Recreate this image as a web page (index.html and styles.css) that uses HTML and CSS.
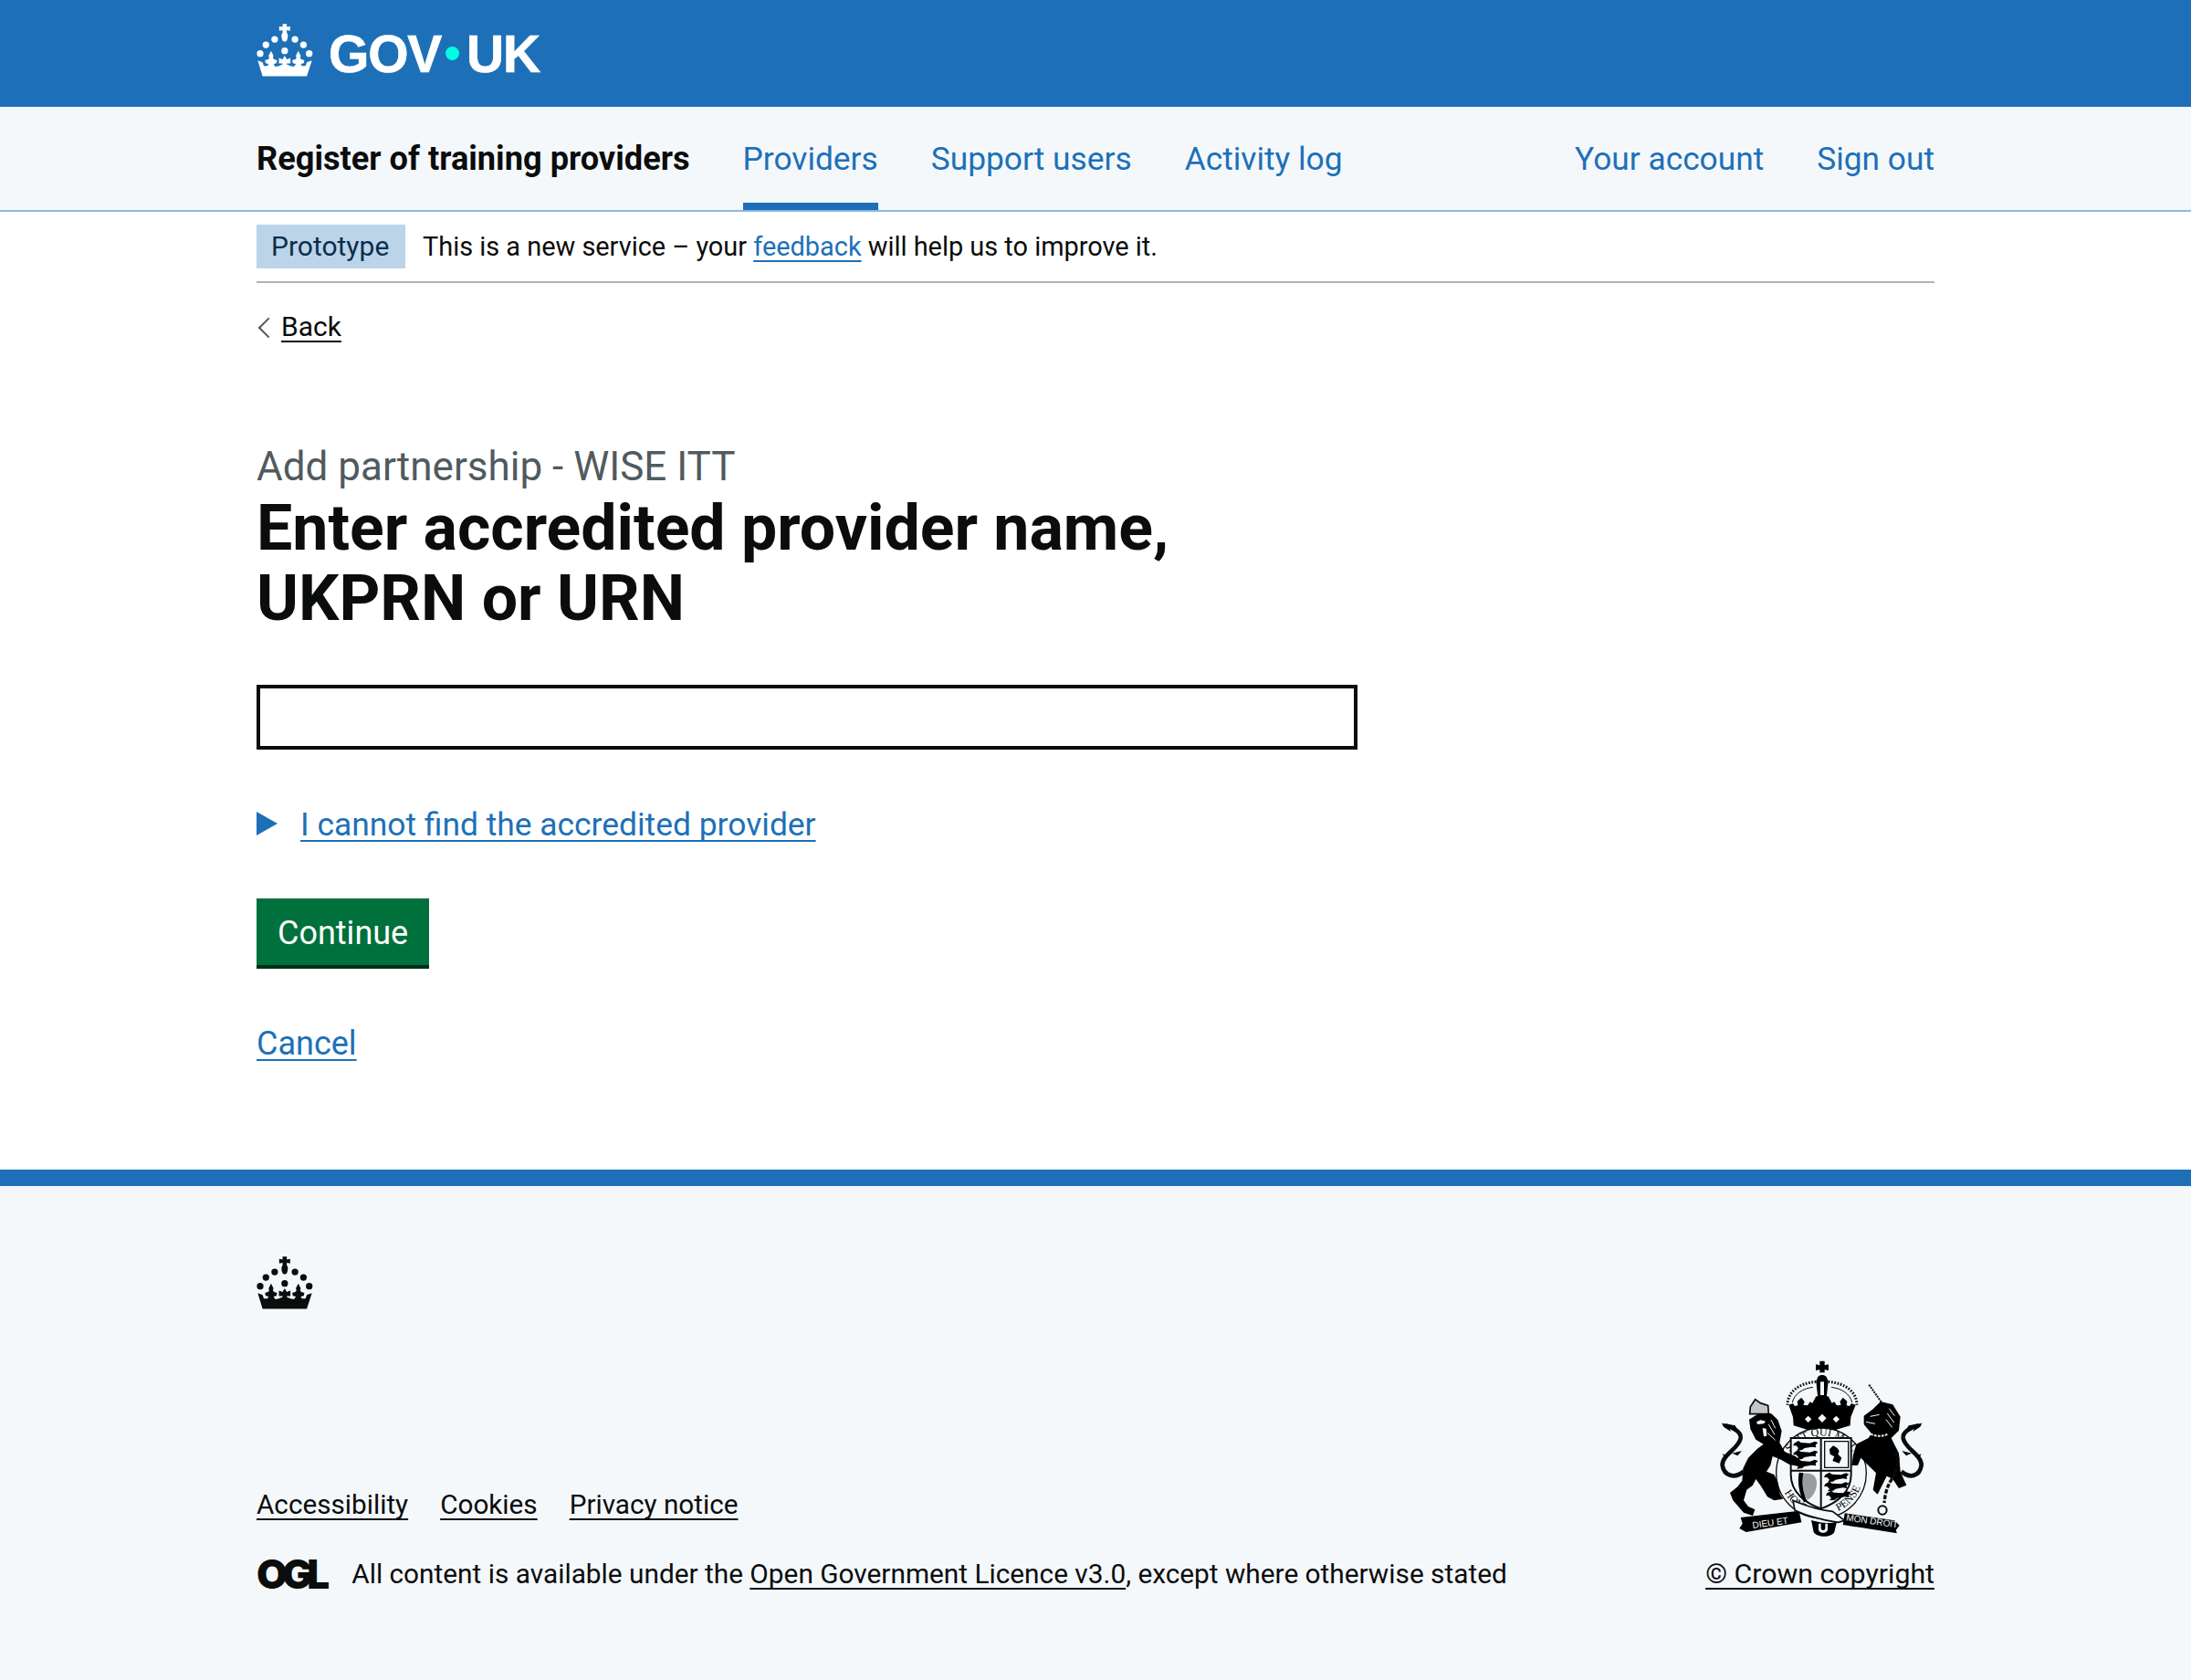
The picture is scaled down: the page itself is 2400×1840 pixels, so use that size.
FILE: index.html
```html
<!DOCTYPE html>
<html lang="en">
<head>
    <meta charset="UTF-8">
    <title>Enter accredited provider name, UKPRN or URN - Register of training providers</title>
    <link rel="stylesheet" href="styles.css">
</head>
<body>
    <svg class="defs" width="0" height="0">
        <symbol id="crown" viewBox="60 70 190 180">
            <path d="M146 73h14v10l11-2v15l-11-2v8c5 6 5 14 0 26 -2 4-12 4-14 0-5-12-5-20 0-26v-8l-11 2V81l11 2z"/>
            <circle cx="120" cy="124" r="11"/><circle cx="187" cy="124" r="11"/>
            <circle cx="91" cy="142" r="11"/><circle cx="215" cy="142" r="11"/>
            <circle cx="72" cy="171" r="11"/><circle cx="234" cy="171" r="11"/>
            <circle cx="153" cy="162" r="11"/>
            <path d="M64 194L80 200 84 212 96 212 100 205 90 203 88 193 98 190 102 186 100 178 108 162 116 178 114 186 118 190 128 193 126 203 116 205 122 214 134 212 146 207 146 204 134 204 134 186 146 190 153 178 160 190 172 186 172 204 160 204 160 207 172 212 184 214 190 205 180 203 178 193 188 190 192 186 190 178 198 162 206 178 204 186 208 190 218 193 216 203 206 205 210 212 222 212 226 200 243 194 226 246 80 246Z"/>
        </symbol>
    </svg>

    <header class="top-bar">
        <div class="wrap">
            <a class="logo" href="#">
                <svg class="crown-icon header-crown"><use href="#crown"/></svg>
                <span class="logo-text">GOV<span class="logo-dot"></span>UK</span>
            </a>
        </div>
    </header>

    <nav class="service-nav">
        <div class="wrap nav-row">
            <a class="service-name" href="#">Register of training providers</a>
            <a class="nav-link active" href="#">Providers</a>
            <a class="nav-link" href="#">Support users</a>
            <a class="nav-link" href="#">Activity log</a>
            <a class="nav-link push-right" href="#">Your account</a>
            <a class="nav-link" href="#">Sign out</a>
        </div>
    </nav>

    <div class="wrap">
        <div class="phase-banner">
            <strong class="phase-tag">Prototype</strong>
            <span class="phase-text">This is a new service – your <a class="link" href="#">feedback</a> will help us to improve it.</span>
        </div>
        <a class="back-link" href="#">Back</a>

        <main class="content">
            <span class="caption">Add partnership - WISE ITT</span>
            <h1>Enter accredited provider name, UKPRN or URN</h1>
            <input class="text-input" type="text">
            <div class="details">
                <span class="details-arrow"></span>
                <a class="link" href="#">I cannot find the accredited provider</a>
            </div>
            <button class="button">Continue</button>
            <p class="cancel"><a class="link" href="#">Cancel</a></p>
        </main>
    </div>

    <footer class="footer">
        <div class="wrap">
            <svg class="crown-icon footer-crown"><use href="#crown"/></svg>
            <div class="footer-row">
                <div class="footer-left">
                    <ul class="footer-links">
                        <li><a href="#">Accessibility</a></li>
                        <li><a href="#">Cookies</a></li>
                        <li><a href="#">Privacy notice</a></li>
                    </ul>
                    <div class="licence">
                        <span class="ogl">OGL</span>
                        <span>All content is available under the <a href="#">Open Government Licence v3.0</a>, except where otherwise stated</span>
                    </div>
                </div>
                <div class="footer-right">
                    <svg class="arms" viewBox="0 0 810 660">
                        <defs>
                            <path id="garter-top" d="M282 400a123 123 0 0 1 246 0"/>
                            <path id="garter-low" d="M268 400a137 137 0 0 0 274 0"/>
                            <path id="leopard" d="M0 8l14-8 8 6 30 2 16-6 10 4-8 8 2 8-14-2-24 4-8 6-18 2 6-8-8-8-10 0z"/>
                        </defs>
                        <!-- crown -->
                        <path d="M400 32h16v14l13-3v20l-13-3v10h-16V60l-13 3V43l13 3z"/>
                        <path d="M394 84c8-8 20-8 28 0l6 14-6 56h-28l-6-56z"/>
                        <path class="white" d="M402 100h12v44h-12z"/>
                        <path class="dots" d="M388 100c-56 4-94 34-94 76M428 100c56 4 94 34 94 76"/>
                        <path class="thin" d="M378 118c-34 4-62 22-68 50M438 118c34 4 62 22 68 50"/>
                        <path d="M298 176L312 171 318 180 328 178 326 164 340 152 350 166 346 176 360 178 368 166 376 170 388 148 428 148 440 170 448 166 456 178 470 176 466 166 476 152 490 164 488 178 498 180 504 171 518 176 502 216 500 244 440 262 372 262 314 244 312 216Z"/>
                        <path class="white" d="M408 206l14 14-14 14-14-14zM362 212l11 11-11 11-11-11zM454 212l11 11-11 11-11-11z"/>
                        <!-- garter and shield -->
                        <circle class="garter" cx="405" cy="400" r="148"/>
                        <text class="garter-text"><textPath href="#garter-top" startOffset="50%" text-anchor="middle">SOIT QUI MAL</textPath></text>
                        <text class="garter-text"><textPath href="#garter-low" startOffset="26%" text-anchor="middle">HONI</textPath></text>
                        <text class="garter-text"><textPath href="#garter-low" startOffset="76%" text-anchor="middle">PENSE</textPath></text>
                        <path class="shield" d="M305 285h198v120c0 60-50 95-99 112-49-17-99-52-99-112z"/>
                        <path class="shield-line" d="M404 285v232M305 392h198"/>
                        <path class="shield-inner" d="M416 296h78v86h-78z"/>
                        <use href="#leopard" x="316" y="294"/>
                        <use href="#leopard" x="316" y="324"/>
                        <use href="#leopard" x="316" y="354"/>
                        <path d="M432 322l12-12 14 8 6 10-4 10 12 12-8 18-22-8 6-14-14-8z"/>
                        <use href="#leopard" x="418" y="398"/>
                        <use href="#leopard" x="418" y="428"/>
                        <use href="#leopard" x="424" y="458"/>
                        <path class="harp" d="M342 402c30-6 48 6 48 30 0 32-18 50-30 56-10-10-18-36-18-86z"/>
                        <path d="M332 398l14 2c-6 30-2 60 12 92l-10 4c-16-30-22-66-16-98z"/>
                        <!-- lion -->
                        <path class="lion-crown" d="M170 206L172 182 188 158 205 170 230 178 232 206Z"/>
                        <path d="M168 224L200 204 240 204 262 225 275 262 268 300 285 330 320 345 345 365 330 378 300 372 270 355 245 345 238 375 225 395 250 405 262 430 270 470 280 485 250 490 228 478 205 440 190 420 180 440 160 455 150 490 165 510 187 520 180 540 150 530 115 490 105 465 130 445 145 425 148 385 165 350 195 320 215 305 190 290 172 255Z"/>
                        <path class="white" d="M192 232l14-6 16 4-6 8-20 2zM212 252l12 2 2 24-10 2z"/>
                        <path class="mane" d="M240 225l14 28M232 240l20 34M228 268l26 24"/>
                        <!-- lion tail -->
                        <path class="tail" d="M150 395C120 420 86 410 80 375 78 340 135 320 140 285 142 265 115 250 90 244"/>
                        <path d="M78 236l44 8 10 18-30-12 6 14-24-16zM112 335l32-8-14 16zM100 345l-20-8 10 18z"/>
                        <!-- unicorn -->
                        <path class="horn" d="M562 110L606 172"/>
                        <path d="M545 212L575 190 600 165 640 175 665 215 660 260 635 285 660 335 665 395 685 440 660 450 640 420 620 410 590 470 575 455 585 400 560 375 535 350 525 375 505 375 510 340 520 305 560 285 570 270 545 240Z"/>
                        <path class="mane" d="M628 188l18 24M622 204l22 30M618 224l20 26M566 214l30-6M552 232l30 6"/>
                        <path class="collar" d="M548 258c20 20 50 26 76 14"/>
                        <path class="chain" d="M648 330c18 26 8 60-16 98-12 20-18 46-20 70"/>
                        <circle class="ring" cx="606" cy="522" r="14"/>
                        <!-- unicorn tail -->
                        <path class="tail" d="M668 395C698 420 728 410 734 375 736 340 679 320 674 285 672 265 699 250 724 244"/>
                        <path d="M736 236l-44 8-10 18 30-12-6 14 24-16zM702 335l-32-8 14 16zM714 345l20-8-10 18z"/>
                        <!-- motto -->
                        <path d="M372 554c20 8 60 14 84 6l-8 34c-8 18-56 20-68 0z"/>
                        <path class="white" d="M396 566h8v16c0 8 14 8 14 0v-16h8v18c0 16-30 16-30 0z"/>
                        <path d="M140 546L332 524 340 562 158 594 136 582 146 566Z"/>
                        <path d="M482 532L646 556 662 572 650 588 654 598 476 570Z"/>
                        <path class="ribbon" d="M312 490c30 12 70 30 130 36l40 30-22 6c-50-6-110-24-142-40z"/>
                        <text class="motto" transform="translate(180 582) rotate(-8)">DIEU ET</text>
                        <text class="motto" transform="translate(486 556) rotate(8)">MON DROIT</text>
                    </svg>
                    <a class="copyright" href="#">© Crown copyright</a>
                </div>
            </div>
        </div>
    </footer>
</body>
</html>
```

FILE: styles.css
```css
* {
    box-sizing: border-box;
}
body {
    margin: 0;
    font-family: Roboto, "Noto Sans", Arial, sans-serif;
    font-size: 30px;
    line-height: 38px;
    color: #0b0c0c;
    background-color: white;
}
a {
    text-decoration-thickness: 2px;
    text-decoration-skip-ink: none;
    text-underline-offset: 5px;
}
.defs {
    position: absolute;
}
.wrap {
    width: 1838px;
    margin: 0 auto;
}
.top-bar {
    height: 117px;
    background-color: #1d70b8;
}
.logo {
    display: flex;
    align-items: center;
    gap: 16px;
    height: 117px;
    color: white;
    text-decoration: none;
}
.crown-icon {
    width: 63px;
    height: 60px;
    fill: currentColor;
    flex-shrink: 0;
}
.header-crown {
    margin-bottom: 8px;
}
.logo-text {
    display: flex;
    align-items: center;
    font-family: "Liberation Sans", Arial, sans-serif;
    font-weight: bold;
    font-size: 57px;
    line-height: 60px;
    letter-spacing: -1.2px;
    -webkit-text-stroke: 0.7px white;
}
.logo-dot {
    width: 15px;
    height: 15px;
    margin: 0 8px 0 5px;
    border-radius: 50%;
    background-color: #00ffe0;
}
.service-nav {
    height: 115px;
    background-color: #f4f8fb;
    border-bottom: 2px solid #8eb8dc;
}
.nav-row {
    display: flex;
    height: 113px;
    gap: 58px;
    align-items: stretch;
    font-size: 35.3px;
}
.service-name {
    display: flex;
    align-items: center;
    font-size: 36.2px;
    font-weight: bold;
    color: #0b0c0c;
    text-decoration: none;
}
.nav-link {
    display: flex;
    align-items: center;
    color: #1d70b8;
    text-decoration: none;
    border-bottom: 8px solid transparent;
    padding-top: 8px;
}
.nav-link.active {
    border-bottom-color: #1d70b8;
}
.push-right {
    margin-left: auto;
}
.phase-banner {
    display: flex;
    align-items: center;
    gap: 19px;
    height: 78px;
    border-bottom: 2px solid #b1b4b6;
}
.phase-tag {
    padding: 5px 16px;
    min-width: 163px;
    font-weight: normal;
    color: #0c2d4a;
    background-color: #bbd4ea;
}
.phase-text {
    font-size: 28.9px;
}
.link {
    color: #1d70b8;
}
.back-link {
    display: inline-block;
    margin-top: 29px;
    padding-left: 27px;
    position: relative;
    color: #0b0c0c;
}
.back-link::before {
    content: "";
    position: absolute;
    left: 5px;
    top: 12px;
    width: 14px;
    height: 14px;
    border-left: 2px solid #505a5f;
    border-bottom: 2px solid #505a5f;
    transform: rotate(45deg);
}
.content {
    padding-top: 109px;
}
.caption {
    display: block;
    font-size: 44px;
    line-height: 50px;
    margin-bottom: 4px;
    color: #505a5f;
}
h1 {
    width: 1206px;
    margin: 0 0 56px;
    font-size: 69.8px;
    line-height: 77px;
    font-weight: bold;
}
.text-input {
    display: block;
    width: 1206px;
    height: 71px;
    border: 4px solid #0b0c0c;
    background: white;
    margin-bottom: 63px;
}
.details {
    display: flex;
    align-items: center;
    gap: 25px;
    font-size: 35.4px;
    margin-bottom: 62px;
}
.details-arrow {
    width: 0;
    height: 0;
    margin-top: -2px;
    border-left: 23px solid #1d70b8;
    border-top: 13px solid transparent;
    border-bottom: 13px solid transparent;
}
.button {
    display: block;
    padding: 2px 23px 0;
    height: 73px;
    border: none;
    box-shadow: 0 4px 0 #002d18;
    font-family: inherit;
    font-size: 36px;
    color: white;
    background-color: #00703c;
    margin-bottom: 67px;
}
.cancel {
    margin: 0 0 119px;
    font-size: 36px;
}
.footer {
    min-height: 562px;
    background-color: #f4f8fb;
    border-top: 18px solid #1d70b8;
    padding-top: 76px;
}
.footer-crown {
    display: block;
    margin-bottom: 45px;
    color: #0b0c0c;
}
.footer-row {
    display: flex;
    justify-content: space-between;
    align-items: flex-end;
}
.footer a {
    color: #0b0c0c;
}
.footer-links {
    display: flex;
    gap: 35px;
    list-style: none;
    margin: 0 0 38px;
    padding: 0;
    font-size: 29.7px;
}
.licence {
    display: flex;
    align-items: center;
    gap: 30px;
    font-size: 29.8px;
}
.ogl {
    font-family: Inter, sans-serif;
    font-weight: 900;
    font-size: 44px;
    line-height: 38px;
    letter-spacing: -6px;
}
.footer-right {
    display: flex;
    flex-direction: column;
    align-items: flex-end;
}
.copyright {
    font-size: 30.3px;
}
.arms {
    width: 270px;
    height: 220px;
    display: block;
    margin-bottom: 5px;
    margin-right: -11px;
}
.arms .white {
    fill: #f4f8fb;
}
.dots {
    fill: none;
    stroke: #0b0c0c;
    stroke-width: 9;
    stroke-dasharray: 5 5;
}
.thin {
    fill: none;
    stroke: #0b0c0c;
    stroke-width: 3;
}
.garter {
    fill: #f4f8fb;
    stroke: #0b0c0c;
    stroke-width: 4;
}
.garter-text {
    font-family: "Liberation Serif", serif;
    font-size: 36px;
}
.shield {
    fill: #f4f8fb;
    stroke: #0b0c0c;
    stroke-width: 6;
}
.shield-line {
    stroke: #0b0c0c;
    stroke-width: 6;
    fill: none;
}
.shield-inner {
    fill: none;
    stroke: #0b0c0c;
    stroke-width: 4;
}
.harp {
    fill: #9a9d9f;
}
.lion-crown {
    fill: #c4c6c7;
    stroke: #0b0c0c;
    stroke-width: 5;
}
.mane {
    fill: none;
    stroke: #f4f8fb;
    stroke-width: 3;
}
.tail {
    fill: none;
    stroke: #0b0c0c;
    stroke-width: 14;
}
.horn {
    stroke: #0b0c0c;
    stroke-width: 6;
    stroke-dasharray: 6 3;
}
.collar {
    fill: none;
    stroke: #f4f8fb;
    stroke-width: 6;
    stroke-dasharray: 8 4;
}
.chain {
    fill: none;
    stroke: #0b0c0c;
    stroke-width: 10;
    stroke-dasharray: 14 5;
}
.ring {
    fill: none;
    stroke: #0b0c0c;
    stroke-width: 6;
}
.ribbon {
    fill: #f4f8fb;
    stroke: #0b0c0c;
    stroke-width: 5;
}
.motto {
    font-family: "Liberation Sans", Arial, sans-serif;
    font-size: 30px;
    fill: #f4f8fb;
}
```
